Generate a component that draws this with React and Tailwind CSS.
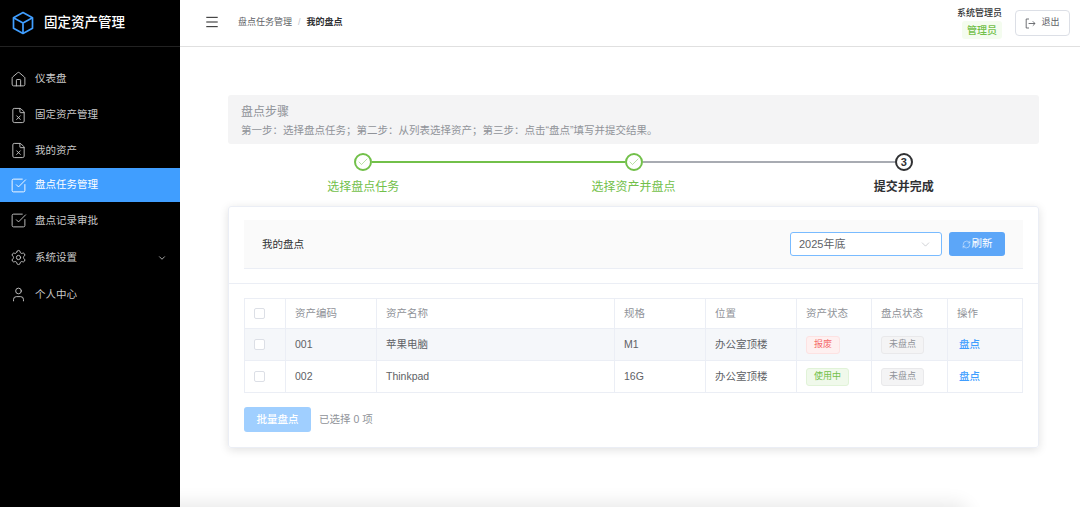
import { Home, FileX, SquareCheckBig, Settings, User, ChevronDown, Check, RefreshCw, Menu } from 'lucide-react';

const menuItems = [
    { label: '仪表盘', icon: Home, height: 'h-[36px]' },
    { label: '固定资产管理', icon: FileX, height: 'h-[36px]' },
    { label: '我的资产', icon: FileX, height: 'h-[35px]' },
    { label: '盘点任务管理', icon: SquareCheckBig, height: 'h-[34px]', active: true },
    { label: '盘点记录审批', icon: SquareCheckBig, height: 'h-[37px]' },
    { label: '系统设置', icon: Settings, height: 'h-[37px]', arrow: true },
    { label: '个人中心', icon: User, height: 'h-[37px]' },
];

const columns = 'grid grid-cols-[41px_91px_238px_91px_91px_75px_76px_76px]';

const rows = [
    { code: '001', name: '苹果电脑', spec: 'M1', place: '办公室顶楼', status: '报废', bad: true, bg: 'bg-[#f5f7fa]', height: 'h-[32px] border-b border-[#ebeef5]' },
    { code: '002', name: 'Thinkpad', spec: '16G', place: '办公室顶楼', status: '使用中', bad: false, bg: 'bg-white', height: 'h-[31px]' },
];

const CheckBox = () => <span className="block w-[11px] h-[11px] rounded-[2px] border border-[#dcdfe6] bg-white"></span>;

const Cell = ({ children, className = '' }) => (
    <div className={`flex items-center pl-[9px] border-r border-[#ebeef5] last:border-r-0 ${className}`}>{children}</div>
);

const Step = ({ done, num, label, lineLeft, lineRight }) => (
    <div className="flex flex-col items-center">
        <div className="flex items-center w-full">
            <div className={`flex-1 h-[2px] ${lineLeft || ''}`}></div>
            <div className={`w-[18px] h-[18px] rounded-full border-2 flex items-center justify-center ${done ? 'border-[#72c04a]' : 'border-[#303133]'}`}>
                {done ? <Check size={12} strokeWidth={1} className="text-[#72c04a]" /> : <span className="text-[11px] font-bold text-[#303133] leading-none">{num}</span>}
            </div>
            <div className={`flex-1 h-[2px] ${lineRight || ''}`}></div>
        </div>
        <div className={`mt-[8px] text-[12px] leading-[16px] ${done ? 'text-[#72c04a]' : 'text-[#303133] font-bold'}`}>{label}</div>
    </div>
);

const App = () => {
    return (
        <div className="flex w-[1080px] h-[507px] overflow-hidden bg-white font-['Liberation_Sans','Noto_Sans_CJK_SC',sans-serif]">
            <aside className="w-[180px] shrink-0 bg-black">
                <div className="h-[47px] flex items-center pl-[12px] border-b border-[#222]">
                    <svg width="22" height="24" viewBox="0 0 22 24" fill="none" stroke="#409eff" strokeWidth="1.7" strokeLinejoin="round">
                        <path d="M11 1.5 20.5 6.8v10.4L11 22.5 1.5 17.2V6.8Z" />
                        <path d="M1.5 6.8 11 12l9.5-5.2M11 12v10.5" />
                    </svg>
                    <span className="ml-[10px] text-[13.5px] font-medium text-white">固定资产管理</span>
                </div>
                <nav className="mt-[14px]">
                    {menuItems.map((item) => {
                        const Icon = item.icon;
                        return (
                            <div key={item.label} className={`flex items-center pl-[10px] pr-[13px] ${item.height} ${item.active ? 'bg-[#409eff] text-white' : 'text-[#c8c8c8]'}`}>
                                <Icon size={17} strokeWidth={1.3} />
                                <span className="ml-[8px] text-[10.5px]">{item.label}</span>
                                {item.arrow && <ChevronDown size={10} className="ml-auto" />}
                            </div>
                        );
                    })}
                </nav>
            </aside>

            <div className="flex-1 flex flex-col min-w-0">
                <header className="h-[47px] shrink-0 flex items-center border-b border-[#e0e0e0] pl-[24px] pr-[10px]">
                    <Menu size={16} strokeWidth={1.5} className="text-[#222] mb-[2px]" />
                    <span className="ml-[18px] text-[9px] text-[#606266]">盘点任务管理</span>
                    <span className="mx-[6px] text-[9px] text-[#c0c4cc]">/</span>
                    <span className="text-[9px] font-bold text-[#303133]">我的盘点</span>
                    <div className="ml-auto flex flex-col items-end mr-[13px]">
                        <span className="text-[9px] leading-[12px] font-medium text-[#303133]">系统管理员</span>
                        <span className="mt-[2px] px-[5px] h-[18px] flex items-center rounded-[3px] bg-[#f4fcef] text-[10px] font-medium text-[#72c04a]">管理员</span>
                    </div>
                    <button className="w-[55px] h-[26px] flex items-center justify-center gap-[5px] rounded-[4px] border border-[#dcdfe6] text-[9px] text-[#606266]">
                        <svg width="11" height="11" viewBox="0 0 11 11" fill="none" stroke="#606266" strokeWidth="0.9">
                            <path d="M4 1H1.2v9H4M3.6 5.5h6.4M7.8 3.3 10 5.5 7.8 7.7" />
                        </svg>
                        退出
                    </button>
                </header>

                <main className="flex-1 min-h-0 pt-[48px] pl-[48px] pr-[41px]">
                    <div className="h-[49px] rounded-[3px] bg-[#f4f4f5] pl-[13px] pt-[9px]">
                        <div className="text-[12px] leading-[17px] text-[#909399]">盘点步骤</div>
                        <div className="mt-[2px] text-[10.5px] leading-[14px] text-[#909399]">第一步：选择盘点任务；第二步：从列表选择资产；第三步：点击“盘点”填写并提交结果。</div>
                    </div>

                    <div className="grid grid-cols-3 mt-[9px]">
                        <Step done label="选择盘点任务" lineRight="bg-[#72c04a]" />
                        <Step done label="选择资产并盘点" lineLeft="bg-[#72c04a]" lineRight="bg-[#a8abb2]" />
                        <Step num="3" label="提交并完成" lineLeft="bg-[#a8abb2]" />
                    </div>

                    <div className="mt-[11px] h-[242px] rounded-[3px] border border-[#ebeef5] shadow-[0_2px_10px_rgba(0,0,0,0.12)] px-[15px] pt-[13px]">
                        <div className="h-[49px] flex items-center bg-[#fafafa] border-b border-[#ebeef5] pl-[18px] pr-[18px]">
                            <span className="pt-px text-[10.5px] text-[#303133]">我的盘点</span>
                            <div className="ml-auto w-[152px] h-[24px] flex items-center justify-between rounded-[3px] border border-[#79bbff] bg-white pl-[8px] pr-[9px]">
                                <span className="pt-px text-[11px] text-[#606266]">2025年底</span>
                                <ChevronDown size={13} strokeWidth={1} className="text-[#a8abb2]" />
                            </div>
                            <button className="ml-[7px] w-[56px] h-[24px] flex items-center justify-center gap-[1px] rounded-[3px] bg-[#5ca6f8] text-[10.5px] text-white">
                                <RefreshCw size={9} strokeWidth={1.2} />
                                刷新
                            </button>
                        </div>

                        <div className="h-px bg-[#ebeef5] mt-[14px] -mx-[15px]"></div>

                        <div className="mt-[14px] border border-[#ebeef5]">
                            <div className={`${columns} h-[30px] text-[10.5px] text-[#909399] border-b border-[#ebeef5]`}>
                                <Cell className="pl-[8px]"><CheckBox /></Cell>
                                <Cell className="pt-px">资产编码</Cell>
                                <Cell className="pt-px">资产名称</Cell>
                                <Cell className="pt-px">规格</Cell>
                                <Cell className="pt-px">位置</Cell>
                                <Cell className="pt-px">资产状态</Cell>
                                <Cell className="pt-px">盘点状态</Cell>
                                <Cell className="pt-px">操作</Cell>
                            </div>
                            {rows.map((row) => (
                                <div key={row.code} className={`${columns} ${row.height} text-[10.5px] text-[#606266] ${row.bg}`}>
                                    <Cell className="pl-[8px]"><CheckBox /></Cell>
                                    <Cell className="pt-px">{row.code}</Cell>
                                    <Cell className="pt-px">{row.name}</Cell>
                                    <Cell className="pt-px">{row.spec}</Cell>
                                    <Cell className="pt-px">{row.place}</Cell>
                                    <Cell>
                                        <span className={`h-[18px] px-[7px] flex items-center rounded-[3px] border text-[9px] ${row.bad ? 'bg-[#fef0f0] border-[#fde2e2] text-[#f56c6c]' : 'bg-[#f0f9eb] border-[#e1f3d8] text-[#72c04a]'}`}>{row.status}</span>
                                    </Cell>
                                    <Cell>
                                        <span className="h-[18px] px-[7px] flex items-center rounded-[3px] border border-[#e9e9eb] bg-[#f4f4f5] text-[9px] text-[#909399]">未盘点</span>
                                    </Cell>
                                    <Cell className="pl-[11px] pt-px">
                                        <span className="text-[#409eff] font-medium">盘点</span>
                                    </Cell>
                                </div>
                            ))}
                        </div>

                        <div className="mt-[14px] flex items-center">
                            <button className="w-[67px] h-[25px] rounded-[3px] bg-[#a0cfff] text-[10.5px] font-medium text-white">批量盘点</button>
                            <span className="ml-[8px] text-[10.5px] text-[#909399]">已选择 0 项</span>
                        </div>
                    </div>
                </main>

                {/* bottom edge of the next panel, only its shadow shows */}
                <div className="relative h-[20px] shrink-0 overflow-hidden">
                    <div className="absolute left-[-30px] top-[20px] w-[815px] h-[20px] rounded-[10px] shadow-[0_0_18px_4px_rgba(0,0,0,0.09)]"></div>
                </div>
            </div>
        </div>
    );
};

export default App;
